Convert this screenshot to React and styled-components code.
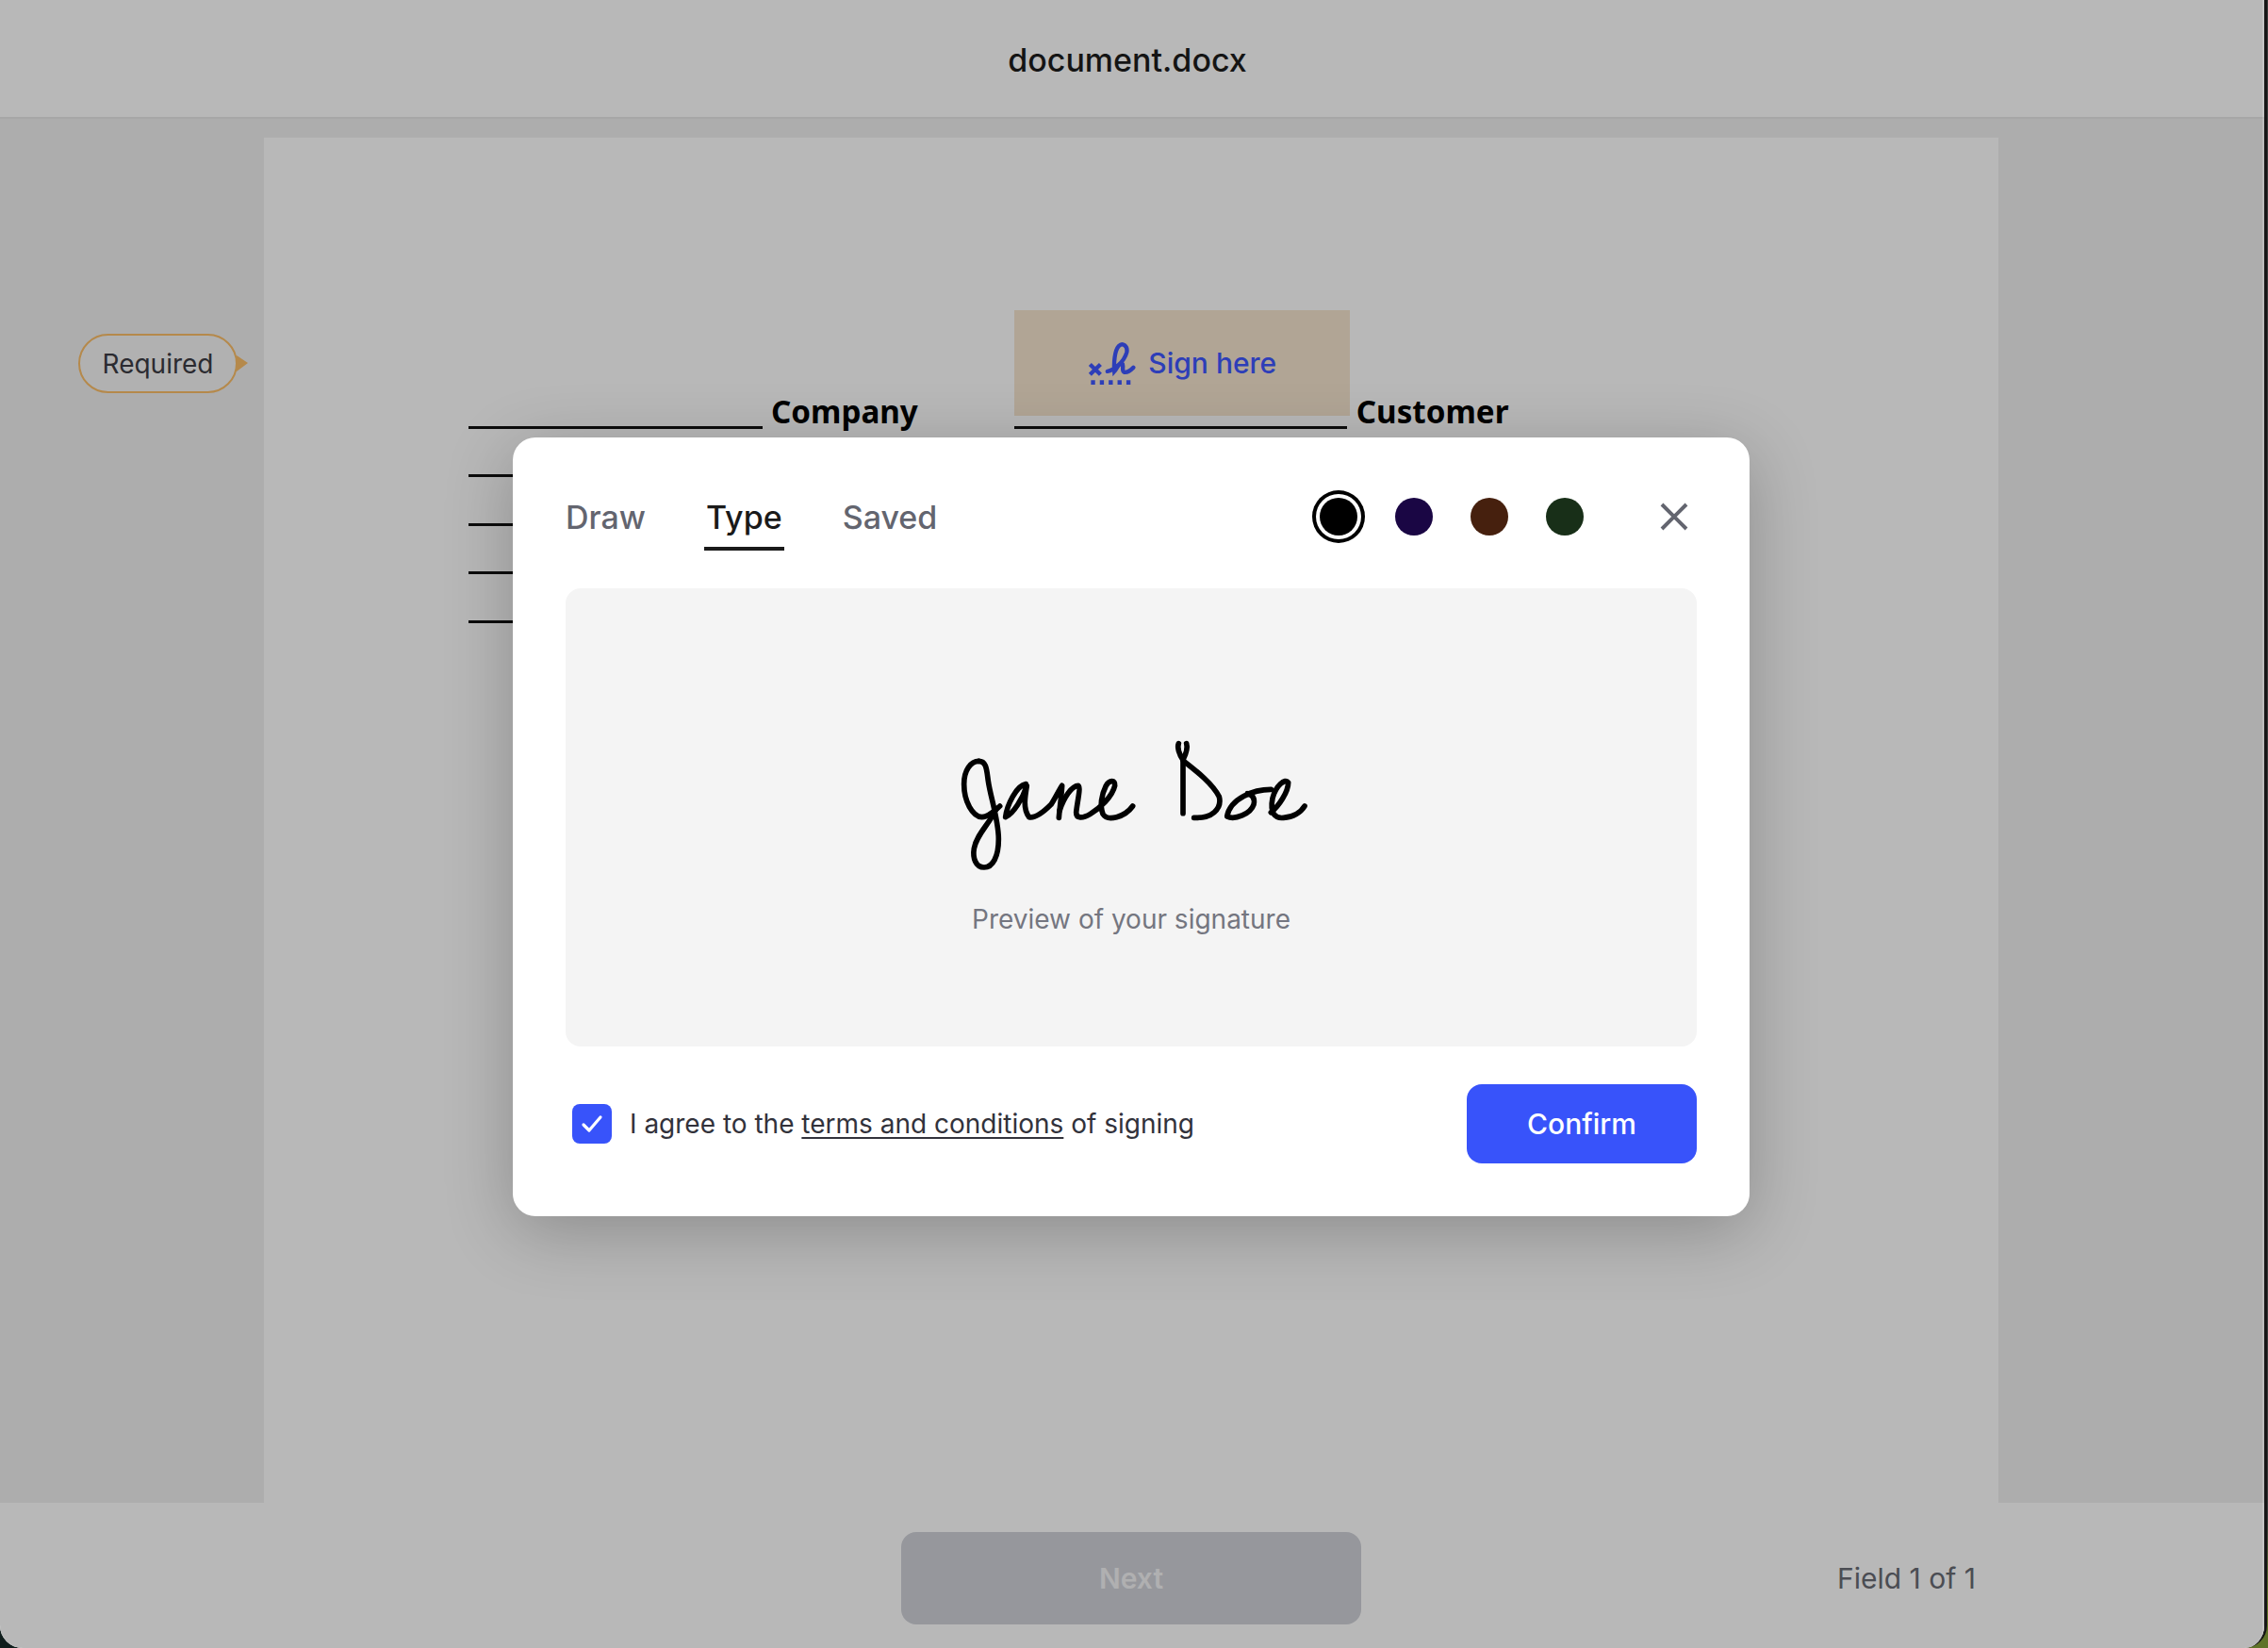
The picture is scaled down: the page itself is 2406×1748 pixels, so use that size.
import React from "react";
import styled, { createGlobalStyle } from "styled-components";

const Global = createGlobalStyle`
  html, body { margin: 0; padding: 0; background: #0f1d1c; }
  body { font-family: Inter, "Liberation Sans", sans-serif; }
  * { box-sizing: border-box; }
`;

const Wallpaper = styled.div`
  position: relative;
  width: 2406px;
  height: 1748px;
  overflow: hidden;
  background:
    linear-gradient(90deg, #0f1d1c 0 50%, transparent 50%),
    linear-gradient(180deg, #3a3a3a 0 92%, #5f7328 97%);
`;
const Window = styled.div`
  position: relative;
  width: 2405px;
  height: 1748px;
  display: flex;
  flex-direction: column;
  overflow: hidden;
  border-right: 3px solid #161616;
  border-radius: 0 0 24px 24px;
  background: #fff;
`;
const Header = styled.header`
  height: 126px;
  flex: none;
  display: flex;
  align-items: center;
  justify-content: center;
  padding-right: 10px;
  background: #fff;
  border-bottom: 2px solid #e8e8e8;
`;
const Title = styled.h1`
  margin: 2px 0 0;
  font-size: 34px;
  font-weight: 500;
  color: #1d1d1d;
`;
const Stage = styled.main`
  flex: 1;
  display: flex;
  justify-content: center;
  padding: 20px 2px 0 0;
  background: #f0f0f0;
  position: relative;
`;
const Sheet = styled.div`
  width: 1840px;
  background: #ffffff;
  margin-bottom: -154px;
  padding: 186px 217px 0;
  z-index: 1;
`;
const DocRow = styled.div`
  display: flex;
  align-items: flex-end;
  height: 123px;
`;
const SignColumn = styled.div`
  display: flex;
  flex-direction: column;
  margin-left: ${(p) => p.$ml || 0}px;
  width: ${(p) => p.$w}px;
`;
const Rule = styled.div`
  width: ${(p) => p.$w}px;
  height: 3px;
  background: #111;
`;
const DocLabel = styled.span`
  font-family: "Noto Sans", sans-serif;
  font-weight: 700;
  font-size: 33.2px;
  line-height: 46px;
  color: #000;
  margin-left: ${(p) => p.$ml}px;
  margin-bottom: -5px;
`;
const Field = styled.button`
  width: 356px;
  height: 112px;
  margin-bottom: 11px;
  border: 0;
  padding: 0;
  background: #f5e5cf;
  color: #3f57ff;
  display: flex;
  align-items: center;
  justify-content: center;
  gap: 13px;
  font-family: Inter, sans-serif;
  font-size: 30px;
  font-weight: 500;
`;
const LineStack = styled.div`
  display: flex;
  flex-direction: column;
  gap: 48.7px;
  margin-top: 48px;
`;
const RequiredTag = styled.div`
  position: absolute;
  left: 83px;
  top: 228px;
  width: 169px;
  height: 63px;
  border: 2px solid #fbbe68;
  border-radius: 32px;
  background: #f6f6f6;
  color: #3c3c45;
  font-size: 28px;
  display: flex;
  align-items: center;
  justify-content: center;
  z-index: 2;
  &::after {
    content: "";
    position: absolute;
    right: -13px;
    top: 50%;
    margin-top: -9px;
    border-left: 12px solid #fbbe68;
    border-top: 8px solid transparent;
    border-bottom: 9px solid transparent;
  }
`;
const Footer = styled.footer`
  height: 154px;
  flex: none;
  background: #fff;
  display: flex;
  align-items: center;
  justify-content: center;
  position: relative;
`;
const NextButton = styled.button`
  width: 488px;
  height: 98px;
  margin-top: 6px;
  margin-right: 2px;
  border: 0;
  border-radius: 16px;
  background: #d0d2d9;
  color: #f4f4f6;
  font-family: Inter, sans-serif;
  font-size: 30px;
  font-weight: 600;
  z-index: 1;
`;
const FieldCount = styled.div`
  position: absolute;
  right: 306px;
  top: calc(50% + 3px);
  transform: translateY(-50%);
  font-size: 30px;
  color: #696b74;
  z-index: 1;
`;
const Overlay = styled.div`
  position: absolute;
  inset: 0;
  background: rgba(0, 0, 0, 0.28);
  box-shadow: inset -2px 0 0 rgba(255, 255, 255, 0.18);
  z-index: 5;
`;
const Modal = styled.section`
  position: absolute;
  left: 544px;
  top: 464px;
  width: 1312px;
  height: 826px;
  padding: 56px 56px 0;
  background: #fff;
  border-radius: 24px;
  box-shadow: 0 16px 72px rgba(0, 0, 0, 0.24);
  z-index: 6;
  display: flex;
  flex-direction: column;
`;
const ModalTop = styled.div`
  height: 104px;
  display: flex;
  align-items: flex-start;
  justify-content: space-between;
`;
const Tabs = styled.div`
  display: flex;
  gap: 62px;
`;
const Tab = styled.div`
  height: 64px;
  padding: 0 ${(p) => (p.$active ? 2 : 0)}px;
  font-size: 34px;
  font-weight: 500;
  line-height: 58px;
  color: ${(p) => (p.$active ? "#1a1a1a" : "#63656f")};
  border-bottom: 4px solid ${(p) => (p.$active ? "#1a1a1a" : "transparent")};
`;
const Tools = styled.div`
  display: flex;
  align-items: center;
  height: 56px;
`;
const Swatches = styled.div`
  display: flex;
  align-items: center;
  gap: 40px;
  margin-right: 80px;
`;
const Swatch = styled.div`
  width: 40px;
  height: 40px;
  border-radius: 50%;
  background: ${(p) => p.$color};
  ${(p) => p.$selected && `box-shadow: 0 0 0 4px #fff, 0 0 0 8px #000;`}
`;
const CloseIcon = styled.svg`
  width: 32px;
  height: 32px;
  display: block;
  margin-right: 8px;
`;
const Canvas = styled.div`
  height: 486px;
  border-radius: 16px;
  background: #f4f4f4;
  display: flex;
  flex-direction: column;
  align-items: center;
  padding-top: 126px;
`;
const SignatureArt = styled.svg`
  width: 450px;
  height: 175px;
  margin-left: 10px;
  display: block;
`;
const PreviewNote = styled.p`
  margin: 33px 0 0;
  font-size: 28px;
  line-height: 34px;
  color: #747680;
`;
const ActionRow = styled.div`
  flex: 1;
  display: flex;
  align-items: center;
  justify-content: space-between;
  padding-bottom: 16px;
  padding-left: 7px;
`;
const Agree = styled.label`
  display: flex;
  align-items: center;
  gap: 19px;
  font-size: 28px;
  color: #32323b;
`;
const Box = styled.span`
  width: 42px;
  height: 42px;
  border-radius: 8px;
  background: #3853fa;
  display: flex;
  align-items: center;
  justify-content: center;
`;
const TermsLink = styled.span`
  text-decoration: underline;
  text-decoration-thickness: 2px;
  text-underline-offset: 4px;
  text-decoration-skip-ink: none;
`;
const Confirm = styled.button`
  width: 244px;
  height: 84px;
  border: 0;
  border-radius: 16px;
  background: #3853fa;
  color: #fff;
  font-family: Inter, sans-serif;
  font-size: 30px;
  font-weight: 500;
`;

const SignGlyph = () => (
  <svg width="52" height="47" viewBox="165 30 155 140" fill="none" stroke="#3f57ff">
    <path d="M175 103L208 135M208 103L175 135" strokeWidth="13" />
    <path
      d="M230 125C250 122 283 95 291 65C295 45 278 32 266 45C252 60 250 100 252 125C258 118 268 98 277 100C283 104 272 128 287 128C297 128 305 120 312 113"
      strokeWidth="13"
      strokeLinecap="round"
    />
    <path d="M178 160H303" strokeWidth="14" strokeDasharray="13 15" />
  </svg>
);

const Signature = () => (
  <SignatureArt
    viewBox="0 0 1350 525"
    fill="none"
    stroke="#000"
    strokeWidth="17"
    strokeLinecap="round"
    strokeLinejoin="round"
  >
    <g transform="translate(60 60)">
      <path d="M115 112C90 112 68 140 68 185C68 240 95 288 125 290C145 290 165 270 182 255" />
      <path d="M115 112C140 112 140 140 145 175C152 225 178 300 178 360C178 415 160 450 132 450C105 450 95 420 100 390C108 345 150 310 170 265" />
      <path d="M265 185C235 190 205 250 200 290C225 280 255 230 268 190C262 225 255 265 275 290C295 295 320 275 345 250C355 235 370 205 380 190C378 225 372 265 370 292" />
      <path d="M372 270C385 230 410 190 432 190C440 195 428 245 425 275C425 295 445 295 470 280C500 262 540 225 548 190C550 170 530 172 520 190C505 220 500 255 510 280C525 305 580 290 605 255" />
    </g>
    <path d="M825 168C812 150 806 128 811 116M825 168C834 150 840 128 836 116M825 168V338" />
    <path d="M825 170C870 205 920 245 940 285C950 325 915 355 860 352" />
    <path d="M1105 262C1050 262 975 290 965 348C990 360 1040 340 1050 310C1055 290 1045 278 1030 275" />
    <path d="M1105 335C1130 315 1160 270 1160 240C1150 225 1120 250 1110 290C1100 340 1120 355 1145 352C1175 350 1200 335 1212 315" />
  </SignatureArt>
);

export default function App() {
  return (
    <Wallpaper>
      <Global />
      <Window>
        <Header>
          <Title>document.docx</Title>
        </Header>
        <Stage>
          <RequiredTag>Required</RequiredTag>
          <Sheet>
            <DocRow>
              <SignColumn $w={312}>
                <Rule $w={312} />
              </SignColumn>
              <DocLabel $ml={9}>Company</DocLabel>
              <SignColumn $ml={102} $w={356}>
                <Field>
                  <SignGlyph />
                  Sign here
                </Field>
                <Rule $w={353} />
              </SignColumn>
              <DocLabel $ml={7}>Customer</DocLabel>
            </DocRow>
            <LineStack>
              <Rule $w={312} />
              <Rule $w={312} />
              <Rule $w={312} />
              <Rule $w={312} />
            </LineStack>
          </Sheet>
        </Stage>
        <Footer>
          <NextButton>Next</NextButton>
          <FieldCount>Field 1 of 1</FieldCount>
        </Footer>
        <Overlay />
        <Modal>
          <ModalTop>
            <Tabs>
              <Tab>Draw</Tab>
              <Tab $active>Type</Tab>
              <Tab>Saved</Tab>
            </Tabs>
            <Tools>
              <Swatches>
                <Swatch $color="#000" $selected />
                <Swatch $color="#1a0644" />
                <Swatch $color="#46200e" />
                <Swatch $color="#182f18" />
              </Swatches>
              <CloseIcon viewBox="0 0 32 32" fill="none" stroke="#63656f" strokeWidth="4">
                <path d="M3 3l26 26M29 3L3 29" />
              </CloseIcon>
            </Tools>
          </ModalTop>
          <Canvas>
            <Signature />
            <PreviewNote>Preview of your signature</PreviewNote>
          </Canvas>
          <ActionRow>
            <Agree>
              <Box>
                <svg width="24" height="24" viewBox="0 0 24 24" fill="none" stroke="#fff" strokeWidth="3.2" strokeLinecap="round" strokeLinejoin="round">
                  <path d="M3 13l6 6L21 5" />
                </svg>
              </Box>
              <span>
                I agree to the <TermsLink>terms and conditions</TermsLink> of signing
              </span>
            </Agree>
            <Confirm>Confirm</Confirm>
          </ActionRow>
        </Modal>
      </Window>
    </Wallpaper>
  );
}
